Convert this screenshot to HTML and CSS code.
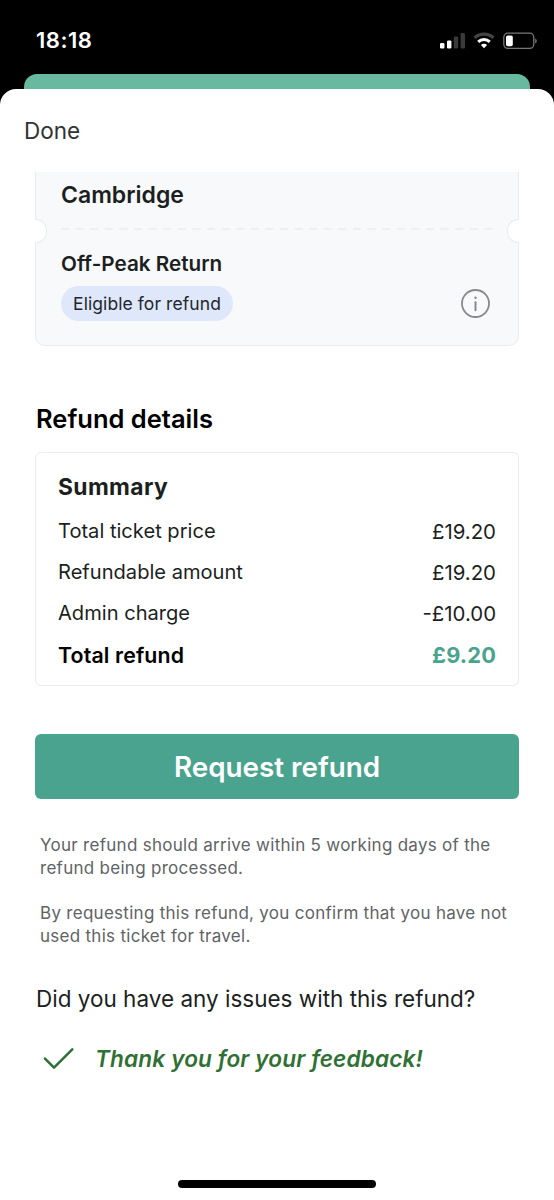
FILE: index.html
```html
<!DOCTYPE html>
<html lang="en">
<head>
<meta charset="utf-8">
<title>Refund details</title>
<link rel="stylesheet" href="styles.css">
</head>
<body>
<div class="phone">
  <header class="status">
    <span class="clock">18:18</span>
    <svg class="status-icons" width="100" height="20" viewBox="0 0 100 20">
      <rect x="1" y="11" width="4.4" height="5.5" rx="1.2" fill="#fff"/>
      <rect x="8" y="8.4" width="4.4" height="8.1" rx="1.2" fill="#fff"/>
      <rect x="14.8" y="4.5" width="4.4" height="12" rx="1.2" fill="#3a3a3a"/>
      <rect x="21.6" y="1" width="4.4" height="15.5" rx="1.2" fill="#3a3a3a"/>
      <path d="M35.6 5.8a14 14 0 0 1 18.8 0" fill="none" stroke="#444" stroke-width="3.4"/>
      <path d="M39.2 9.8a8.8 8.8 0 0 1 11.6 0" fill="none" stroke="#fff" stroke-width="3"/>
      <path d="M41.9 13a4.8 4.8 0 0 1 6.2 0L45 16.2z" fill="#fff"/>
      <rect x="64.8" y="1.2" width="30" height="15.2" rx="4.2" fill="none" stroke="#777" stroke-width="1.3"/>
      <rect x="67" y="3.4" width="6.8" height="10.8" rx="1.8" fill="#fff"/>
      <path d="M96.2 6.4c2 .7 2 4.2 0 4.9z" fill="#777"/>
    </svg>
  </header>
  <div class="behind"></div>
  <main class="sheet">
    <nav class="nav"><span class="done">Done</span></nav>
    <section class="ticket">
      <div class="station">Cambridge</div>
      <svg class="tear" width="433" height="2" viewBox="0 0 433 2"><path d="M0 1h433" stroke="#e9ebee" stroke-width="1.5" stroke-dasharray="8 6.6"/></svg>
      <div class="fare">
        <div>
          <div class="fare-name">Off-Peak Return</div>
          <div class="badge">Eligible for refund</div>
        </div>
        <svg class="info" width="30" height="30" viewBox="0 0 30 30">
          <circle cx="15.5" cy="15.5" r="13.5" fill="none" stroke="#868a8d" stroke-width="1.8"/>
          <circle cx="15.5" cy="9.8" r="1.2" fill="#868a8d"/>
          <path d="M15.5 14.2v8" stroke="#868a8d" stroke-width="2" stroke-linecap="round"/>
        </svg>
      </div>
    </section>
    <h1 class="title">Refund details</h1>
    <section class="summary">
      <h2 class="summary-title">Summary</h2>
      <div class="row"><span>Total ticket price</span><span class="amount">£19.20</span></div>
      <div class="row"><span>Refundable amount</span><span class="amount">£19.20</span></div>
      <div class="row"><span>Admin charge</span><span class="amount">-£10.00</span></div>
      <div class="row total"><span>Total refund</span><span class="amount">£9.20</span></div>
    </section>
    <button class="cta">Request refund</button>
    <div class="notes">
      <p>Your refund should arrive within 5 working days of the<br>refund being processed.</p>
      <p>By requesting this refund, you confirm that you have not<br>used this ticket for travel.</p>
    </div>
    <div class="question">Did you have any issues with this refund?</div>
    <div class="thanks">
      <svg width="32" height="24" viewBox="0 0 32 24"><path d="M2 11.7l9 9L29.3 2.3" fill="none" stroke="#2f7034" stroke-width="2.5" stroke-linecap="round" stroke-linejoin="round"/></svg>
      <span class="thanks-text">Thank you for your feedback!</span>
    </div>
    <div class="home"></div>
  </main>
</div>
</body>
</html>
```
FILE: styles.css
```css
* { box-sizing: border-box; }
body { margin: 0; font-family: Inter, "Liberation Sans", sans-serif; color: #1c1f22; background: #000; }
h1, h2, p { margin: 0; }
.phone { width: 554px; height: 1200px; display: flex; flex-direction: column; overflow: hidden; background: #000; }
.status { height: 74px; flex: none; display: flex; justify-content: space-between; padding: 26px 15px 0 36px; }
.clock { color: #fff; font-size: 22px; font-weight: 600; line-height: 29px; letter-spacing: 0.5px; }
.status-icons { margin-top: 6px; }
.behind { flex: none; height: 15px; margin: 0 24px; background: #69b8a0; border-radius: 13px 13px 0 0; }
.sheet { flex: 1; display: flex; flex-direction: column; background: #fff; border-radius: 16px 16px 0 0; padding: 0 35px; }
.nav { height: 83px; flex: none; padding-top: 27px; margin-left: -11px; }
.done { font-size: 22.5px; line-height: 30px; color: #303234; }
.ticket { position: relative; height: 174px; flex: none; background: #f8f9fb; border: 1px solid #e9ebee; border-top: 0; border-radius: 0 0 10px 10px; padding: 8px 27px 0 25px; display: flex; flex-direction: column; }
.ticket::before, .ticket::after { content: ""; position: absolute; top: 47px; width: 11px; height: 22px; background: #fff; border: 1px solid #e9ebee; }
.ticket::before { left: -1px; border-left: 0; border-radius: 0 11px 11px 0; }
.ticket::after { right: -1px; border-right: 0; border-radius: 11px 0 0 11px; }
.station { font-size: 23px; font-weight: 600; line-height: 30px; }
.tear { margin: 18px 0 0; }
.fare { display: flex; justify-content: space-between; align-items: flex-end; margin-top: 20px; }
.fare-name { font-size: 20.7px; font-weight: 600; line-height: 28px; }
.badge { display: flex; align-items: center; justify-content: center; width: 172px; height: 35px; margin-top: 8px; border-radius: 18px; background: #dfe8fb; color: #22262d; font-size: 17.5px; letter-spacing: 0.08px; }
.info { margin: 0 1px 3px 0; }
.title { margin: 54px 0 0 1px; font-size: 25.5px; font-weight: 600; line-height: 38px; color: #000; }
.summary { margin-top: 14px; height: 234px; flex: none; border: 1px solid #e9ebec; border-radius: 6px; padding: 18px 22px 0; }
.summary-title { font-size: 22.8px; font-weight: 700; line-height: 32px; margin-bottom: 7.7px; letter-spacing: 0.4px; }
.row { display: flex; justify-content: space-between; height: 41.4px; line-height: 41.4px; font-size: 20.1px; }
.amount { font-size: 20.4px; }
.total { font-weight: 600; color: #000; font-size: 21.3px; letter-spacing: 0.15px; }
.total .amount { color: #4aa38e; font-size: 21.8px; font-weight: 700; }
.cta { margin-top: 48px; height: 65px; flex: none; border: 0; border-radius: 6px; background: #4aa38f; color: #fff; font-family: inherit; font-size: 27.8px; font-weight: 600; padding: 1px 0 0; }
.notes { margin: 35px 0 0 5px; color: #606365; font-size: 17px; line-height: 22.8px; letter-spacing: 0.28px; white-space: nowrap; }
.notes p + p { margin-top: 22.6px; }
.question { margin: 35px 0 0 1px; font-size: 22.5px; line-height: 32px; white-space: nowrap; }
.thanks { display: flex; align-items: center; gap: 20px; margin: 28px 0 0 8px; height: 32px; color: #2f7034; }
.thanks-text { font-size: 22.6px; font-weight: 600; font-style: italic; letter-spacing: 0.14px; white-space: nowrap; }
.home { width: 198px; height: 8px; border-radius: 4px; background: #000; margin: auto auto 12px; }
```
